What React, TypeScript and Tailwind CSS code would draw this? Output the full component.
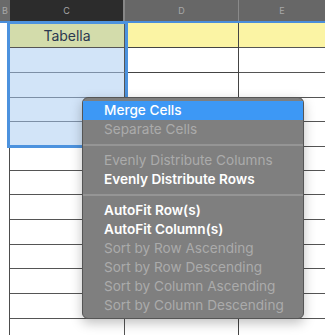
const rowHeights = [
  "h-[25px]", "h-[25px]", "h-[25px]", "h-[24px]", "h-[25px]", "h-[24px]",
  "h-[24px]", "h-[25px]", "h-[25px]", "h-[24px]", "h-[25px]", "h-[25px]", "h-[25px]",
];

type Item = { label: string; enabled?: boolean; active?: boolean } | "sep";

const menu: Item[] = [
  { label: "Merge Cells", enabled: true, active: true },
  { label: "Separate Cells" },
  "sep",
  { label: "Evenly Distribute Columns" },
  { label: "Evenly Distribute Rows", enabled: true },
  "sep",
  { label: "AutoFit Row(s)", enabled: true },
  { label: "AutoFit Column(s)", enabled: true },
  { label: "Sort by Row Ascending" },
  { label: "Sort by Row Descending" },
  { label: "Sort by Column Ascending" },
  { label: "Sort by Column Descending" },
];

export default function App() {
  return (
    <div className="relative h-[335px] w-[325px] overflow-hidden bg-white font-['Inter',sans-serif]">
      {/* Column header */}
      <div className="flex h-[21px] text-[9px] text-[#a8a8a8]">
        <div className="flex w-[10px] items-center justify-center bg-[#6a6a6a]">B</div>
        <div className="flex w-[115px] items-center justify-center border-r-2 border-[#878787] bg-[#2c2c2c]">C</div>
        <div className="flex w-[114px] items-center justify-center border-r border-[#8a8a8a] bg-[#676767]">D</div>
        <div className="flex flex-1 items-center justify-center bg-[#676767]">E</div>
      </div>

      {/* Grid */}
      <div className="border-t-2 border-[#4a8edb]">
        {rowHeights.map((h, i) => (
          <div key={i} className={`flex ${h}`}>
            <div className="w-[10px] border-r border-[#4d4d4d]" />
            <div
              className={`flex w-[115px] items-center justify-center border-b border-r border-[#555] ${
                i === 0 ? "bg-[#d3dcab]" : i < 5 ? "bg-[#d2e4f8] border-b-[#7d8fa6]" : ""
              }`}
            >
              {i === 0 && <span className="text-[14px] text-[#2b3850]">Tabella</span>}
            </div>
            <div className={`w-[114px] border-b border-r border-[#444] ${i === 0 ? "bg-[#fbf4a4]" : ""}`} />
            <div className={`flex-1 border-b border-[#555] ${i === 0 ? "bg-[#fbf4a4]" : ""}`} />
          </div>
        ))}
      </div>

      {/* Selection outline */}
      <div className="absolute left-[7px] top-[21px] h-[127px] w-[121px] border-[3px] border-[#4c92de]" />

      {/* Context menu */}
      <div className="absolute left-[82px] top-[97px] w-[222px] rounded-[6px] border border-[#555] bg-[#7f7f7f] py-[3px] shadow-[0_4px_12px_rgba(0,0,0,0.25)]">
        {menu.map((m, i) =>
          m === "sep" ? (
            <div key={i} className="my-[5px] h-[2px] bg-[#959595]" />
          ) : (
            <div
              key={i}
              className={`flex h-[19px] items-center pl-[21px] text-[13.6px] leading-none ${
                m.active
                  ? "bg-[#3d98f5] font-medium text-white"
                  : m.enabled
                  ? "font-semibold text-white"
                  : "text-[#ababab]"
              }`}
            >
              {m.label}
            </div>
          )
        )}
      </div>
    </div>
  );
}
